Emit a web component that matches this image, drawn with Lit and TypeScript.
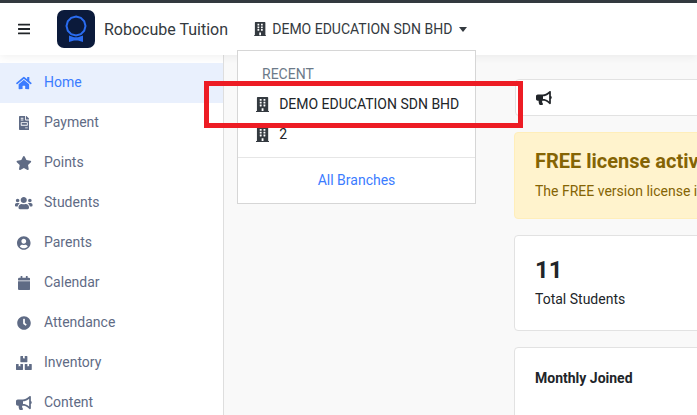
import { LitElement, html, css, svg } from "lit";
import { customElement } from "lit/decorators.js";

const ICONS: Record<string, [number, string]> = {
  bars: [448, "M16 132h416c8.837 0 16-7.163 16-16V76c0-8.837-7.163-16-16-16H16C7.163 60 0 67.163 0 76v40c0 8.837 7.163 16 16 16zm0 160h416c8.837 0 16-7.163 16-16v-40c0-8.837-7.163-16-16-16H16c-8.837 0-16 7.163-16 16v40c0 8.837 7.163 16 16 16zm0 160h416c8.837 0 16-7.163 16-16v-40c0-8.837-7.163-16-16-16H16c-8.837 0-16 7.163-16 16v40c0 8.837 7.163 16 16 16z"],
  home: [576, "M280.37 148.26L96 300.11V464a16 16 0 0 0 16 16l112.06-.29a16 16 0 0 0 15.92-16V368a16 16 0 0 1 16-16h64a16 16 0 0 1 16 16v95.64a16 16 0 0 0 16 16.05L464 480a16 16 0 0 0 16-16V300L295.67 148.26a12.19 12.19 0 0 0-15.3 0zM571.6 251.47L488 182.56V44.05a12 12 0 0 0-12-12h-56a12 12 0 0 0-12 12v72.61L318.47 43a48 48 0 0 0-61 0L4.34 251.47a12 12 0 0 0-1.6 16.9l25.5 31A12 12 0 0 0 45.15 301l235.22-193.74a12.19 12.19 0 0 1 15.3 0L530.9 301a12 12 0 0 0 16.9-1.6l25.5-31a12 12 0 0 0-1.7-16.93z"],
  invoice: [384, "M288 256H96v64h192v-64zm89-151L279.1 7c-4.5-4.5-10.6-7-17-7H256v128h128v-6.1c0-6.3-2.5-12.4-7-16.9zm-153 31V0H24C10.7 0 0 10.7 0 24v464c0 13.3 10.7 24 24 24h336c13.3 0 24-10.7 24-24V160H248c-13.2 0-24-10.8-24-24zM64 72c0-4.42 3.58-8 8-8h80c4.42 0 8 3.58 8 8v16c0 4.42-3.58 8-8 8H72c-4.42 0-8-3.58-8-8V72zm0 64c0-4.42 3.58-8 8-8h80c4.42 0 8 3.58 8 8v16c0 4.42-3.58 8-8 8H72c-4.42 0-8-3.58-8-8v-16zm256 304c0 4.42-3.58 8-8 8h-80c-4.42 0-8-3.58-8-8v-16c0-4.42 3.58-8 8-8h80c4.42 0 8 3.58 8 8v16zm0-200v96c0 8.84-7.16 16-16 16H80c-8.84 0-16-7.16-16-16v-96c0-8.84 7.16-16 16-16h224c8.84 0 16 7.16 16 16z"],
  star: [576, "M259.3 17.8L194 150.2 47.9 171.5c-26.2 3.8-36.7 36.1-17.7 54.6l105.7 103-25 145.5c-4.5 26.3 23.2 46 46.4 33.7L288 439.6l130.7 68.7c23.2 12.2 50.9-7.4 46.4-33.7l-25-145.5 105.7-103c19-18.5 8.5-50.8-17.7-54.6L382 150.2 316.7 17.8c-11.7-23.6-45.6-23.9-57.4 0z"],
  users: [640, "M96 224c35.3 0 64-28.7 64-64s-28.7-64-64-64-64 28.7-64 64 28.7 64 64 64zm448 0c35.3 0 64-28.7 64-64s-28.7-64-64-64-64 28.7-64 64 28.7 64 64 64zm32 32h-64c-17.6 0-33.5 7.1-45.1 18.6 40.3 22.1 68.9 62 75.1 109.4h66c17.7 0 32-14.3 32-32v-32c0-35.3-28.7-64-64-64zm-256 0c61.9 0 112-50.1 112-112S381.9 32 320 32 208 82.1 208 144s50.1 112 112 112zm76.8 32h-8.3c-20.8 10-43.9 16-68.5 16s-47.6-6-68.5-16h-8.3C179.6 288 128 339.6 128 403.2V432c0 26.5 21.5 48 48 48h288c26.5 0 48-21.5 48-48v-28.8c0-63.6-51.6-115.2-115.2-115.2zm-223.7-13.4C161.5 263.1 145.6 256 128 256H64c-35.3 0-64 28.7-64 64v32c0 17.7 14.3 32 32 32h65.9c6.3-47.4 34.9-87.3 75.2-109.4z"],
  user: [496, "M248 8C111 8 0 119 0 256s111 248 248 248 248-111 248-248S385 8 248 8zm0 96c48.6 0 88 39.4 88 88s-39.4 88-88 88-88-39.4-88-88 39.4-88 88-88zm0 344c-58.7 0-111.3-26.6-146.5-68.2 18.8-35.4 55.6-59.8 98.5-59.8 2.4 0 4.8.4 7.1 1.1 13 4.2 26.6 6.9 40.9 6.9 14.3 0 28-2.7 40.9-6.9 2.3-.7 4.7-1.1 7.1-1.1 42.9 0 79.7 24.4 98.5 59.8C359.3 421.4 306.7 448 248 448z"],
  calendar: [448, "M12 192h424c6.6 0 12 5.4 12 12v260c0 26.5-21.5 48-48 48H48c-26.5 0-48-21.5-48-48V204c0-6.6 5.4-12 12-12zm436-44v-36c0-26.5-21.5-48-48-48h-48V12c0-6.6-5.4-12-12-12h-40c-6.6 0-12 5.4-12 12v52H160V12c0-6.6-5.4-12-12-12h-40c-6.6 0-12 5.4-12 12v52H48C21.5 64 0 85.5 0 112v36c0 6.6 5.4 12 12 12h424c6.6 0 12-5.4 12-12z"],
  clock: [512, "M256,8C119,8,8,119,8,256S119,504,256,504,504,393,504,256,393,8,256,8Zm92.49,313h0l-20,25a16,16,0,0,1-22.49,2.5h0l-67-49.72a40,40,0,0,1-15-31.23V112a16,16,0,0,1,16-16h32a16,16,0,0,1,16,16V256l58,42.5A16,16,0,0,1,348.49,321Z"],
  boxes: [576, "M560 288h-80v96l-32-21.3-32 21.3v-96h-80c-8.8 0-16 7.2-16 16v192c0 8.8 7.2 16 16 16h224c8.8 0 16-7.2 16-16V304c0-8.8-7.2-16-16-16zm-384-64h224c8.8 0 16-7.2 16-16V16c0-8.8-7.2-16-16-16h-80v96l-32-21.3L256 96V0h-80c-8.8 0-16 7.2-16 16v192c0 8.8 7.2 16 16 16zm64 64h-80v96l-32-21.3L96 384v-96H16c-8.8 0-16 7.2-16 16v192c0 8.8 7.2 16 16 16h224c8.8 0 16-7.2 16-16V304c0-8.8-7.2-16-16-16z"],
  bullhorn: [576, "M576 240c0-23.63-12.95-44.04-32-55.12V32.01C544 23.26 537.02 0 512 0c-7.12 0-14.19 2.38-19.98 7.02l-85.03 68.03C364.28 109.19 310.66 128 256 128H64c-35.35 0-64 28.65-64 64v96c0 35.35 28.65 64 64 64h33.7c-1.39 10.48-2.18 21.14-2.18 32 0 39.77 9.26 77.35 25.56 110.94 5.19 10.69 16.52 17.06 28.4 17.06h74.28c26.05 0 41.69-29.84 25.9-50.56-16.4-21.52-26.15-48.36-26.15-77.44 0-11.11 1.62-21.79 4.41-32H256c54.66 0 108.28 18.81 150.98 52.95l85.03 68.03a32.023 32.023 0 0 0 19.98 7.02c24.92 0 32-22.78 32-32V295.13C563.05 284.04 576 263.63 576 240zm-96 141.42l-33.05-26.44C392.95 311.78 325.12 288 256 288v-96c69.12 0 136.95-23.78 190.95-66.98L480 98.58v282.84z"],
  building: [448, "M436 480h-20V24c0-13.255-10.745-24-24-24H56C42.745 0 32 10.745 32 24v456H12c-6.627 0-12 5.373-12 12v20h448v-20c0-6.627-5.373-12-12-12zM128 76c0-6.627 5.373-12 12-12h40c6.627 0 12 5.373 12 12v40c0 6.627-5.373 12-12 12h-40c-6.627 0-12-5.373-12-12V76zm0 96c0-6.627 5.373-12 12-12h40c6.627 0 12 5.373 12 12v40c0 6.627-5.373 12-12 12h-40c-6.627 0-12-5.373-12-12v-40zm52 148h-40c-6.627 0-12-5.373-12-12v-40c0-6.627 5.373-12 12-12h40c6.627 0 12 5.373 12 12v40c0 6.627-5.373 12-12 12zm76 160h-64v-84c0-6.627 5.373-12 12-12h40c6.627 0 12 5.373 12 12v84zm64-172c0 6.627-5.373 12-12 12h-40c-6.627 0-12-5.373-12-12v-40c0-6.627 5.373-12 12-12h40c6.627 0 12 5.373 12 12v40zm0-96c0 6.627-5.373 12-12 12h-40c-6.627 0-12-5.373-12-12v-40c0-6.627 5.373-12 12-12h40c6.627 0 12 5.373 12 12v40zm0-96c0 6.627-5.373 12-12 12h-40c-6.627 0-12-5.373-12-12V76c0-6.627 5.373-12 12-12h40c6.627 0 12 5.373 12 12v40z"],
};

const icon = (name: string, h = 14) => {
  const [w, d] = ICONS[name];
  return html`<svg class="fa" viewBox="0 0 ${w} 512" style="width:${(w / 512) * h}px;height:${h}px">${svg`<path fill="currentColor" d=${d}></path>`}</svg>`;
};

const NAV = [
  ["home", "Home"],
  ["invoice", "Payment"],
  ["star", "Points"],
  ["users", "Students"],
  ["user", "Parents"],
  ["calendar", "Calendar"],
  ["clock", "Attendance"],
  ["boxes", "Inventory"],
  ["bullhorn", "Content"],
];

@customElement("app-root")
export class AppRoot extends LitElement {
  static styles = css`
    :host {
      display: flex;
      flex-direction: column;
      position: relative;
      width: 697px;
      height: 415px;
      overflow: hidden;
      background: #f9f9f9;
      color: #212529;
      font-family: Roboto, "Liberation Sans", sans-serif;
      font-size: 14px;
      line-height: 21px;
    }
    .fa { display: block; flex: none; }
    .strip { height: 3px; background: #343a40; flex: none; }
    .nav {
      height: 52px;
      flex: none;
      background: #fff;
      display: flex;
      align-items: center;
      box-shadow: 0 2px 8px rgba(0, 0, 0, 0.06);
      position: relative;
      z-index: 2;
    }
    .burger { width: 57px; flex: none; padding-left: 18px; box-sizing: border-box; color: #212529; }
    .logo { width: 38px; height: 38px; border-radius: 7px; background: #0b1a3b; flex: none; display: block; }
    .brand { font-size: 16px; margin-left: 9px; color: #343a40; width: 150px; flex: none; white-space: nowrap; }
    .branch { display: flex; align-items: center; gap: 6px; color: #343a40; white-space: nowrap; }
    .caret {
      width: 0; height: 0;
      border-left: 4px solid transparent;
      border-right: 4px solid transparent;
      border-top: 5px solid #343a40;
      margin-left: 1px;
    }
    .body { flex: 1; display: flex; min-height: 0; }
    .side {
      width: 224px;
      flex: none;
      box-sizing: border-box;
      background: #fff;
      border-right: 1px solid #dedede;
      padding-top: 8px;
    }
    .item {
      height: 40px;
      box-sizing: border-box;
      padding-bottom: 2px;
      display: flex;
      align-items: center;
      color: #5f6b85;
    }
    .item.on { background: #e9f0fd; color: #3b7cff; }
    .ico { width: 44px; padding: 2px 12px 0 16px; box-sizing: border-box; display: flex; justify-content: center; flex: none; }
    .main {
      flex: 1;
      min-width: 0;
      padding: 24px 0 0 290px;
      display: flex;
      flex-direction: column;
    }
    .card, .alert {
      box-sizing: border-box;
      width: 600px;
      flex: none;
      border-radius: 4px;
    }
    .card { background: #fff; border: 1px solid #e2e2e2; }
    .announce { height: 37px; margin-left: 1px; display: flex; align-items: center; padding-left: 20px; color: #212529; }
    .alert {
      margin-top: 16px;
      height: 87px;
      background: #fff3cd;
      border: 1px solid #ffeeba;
      color: #856404;
      padding: 16px 20px;
      white-space: nowrap;
    }
    .alert h4 { margin: 0 0 8px; font-size: 20px; line-height: 24px; font-weight: 700; }
    .alert p { margin: 0; }
    .stat { margin-top: 16px; height: 96px; padding: 20px; }
    .stat b { display: block; font-size: 24px; line-height: 29px; font-weight: 700; color: #212529; }
    .stat span { display: block; margin-top: 4px; }
    .month { margin-top: 16px; height: 120px; padding: 20px; font-weight: 700; }
    .menu {
      position: absolute;
      left: 237px;
      top: 50px;
      width: 239px;
      height: 154px;
      box-sizing: border-box;
      background: #fff;
      border: 1px solid #d6d6d6;
      z-index: 3;
      display: flex;
      flex-direction: column;
    }
    .head { color: #6c7a89; padding: 13px 24px 0; height: 38px; box-sizing: border-box; flex: none; }
    .row { height: 30px; flex: none; display: flex; align-items: center; gap: 10px; padding-left: 18px; color: #212529; white-space: nowrap; }
    .row .fa { color: #343a40; }
    .sep { border-top: 1px solid #e6e6e6; margin-top: 8px; flex: none; }
    .all { color: #3b7cff; text-align: center; padding-top: 12px; }
    .mark {
      position: absolute;
      left: 204px;
      top: 81px;
      width: 319px;
      height: 47px;
      box-sizing: border-box;
      border: 5px solid #ed1c24;
      z-index: 4;
    }
  `;

  render() {
    return html`
      <div class="strip"></div>
      <header class="nav">
        <div class="burger">${icon("bars")}</div>
        <svg class="logo" viewBox="0 0 38 38" fill="none">
          <path d="M19 6.5l4.8 1.3 3.4 3.4 1.3 4.8-1.3 4.8-3.4 3.4-4.8 1.3-4.8-1.3-3.4-3.4-1.3-4.8 1.3-4.8 3.4-3.4z" stroke="#2a6cf0" stroke-width="2"></path>
          <path d="M12 25.5l5 1.8h4l5-1.8V32l-5-1.6h-4L12 32z" fill="#2a6cf0"></path>
        </svg>
        <div class="brand">Robocube Tuition</div>
        <div class="branch">${icon("building")}<span>DEMO EDUCATION SDN BHD</span><i class="caret"></i></div>
      </header>
      <div class="body">
        <aside class="side">
          ${NAV.map(
            ([i, t], n) => html`<div class="item ${n === 0 ? "on" : ""}"><div class="ico">${icon(i)}</div><span>${t}</span></div>`
          )}
        </aside>
        <main class="main">
          <div class="card announce">${icon("bullhorn")}</div>
          <div class="alert">
            <h4>FREE license activated</h4>
            <p>The FREE version license is active for this account</p>
          </div>
          <div class="card stat"><b>11</b><span>Total Students</span></div>
          <div class="card month">Monthly Joined</div>
        </main>
      </div>
      <div class="menu">
        <div class="head">RECENT</div>
        <div class="row">${icon("building", 15)}<span>DEMO EDUCATION SDN BHD</span></div>
        <div class="row">${icon("building", 15)}<span>2</span></div>
        <div class="sep"></div>
        <div class="all">All Branches</div>
      </div>
      <div class="mark"></div>
    `;
  }
}
